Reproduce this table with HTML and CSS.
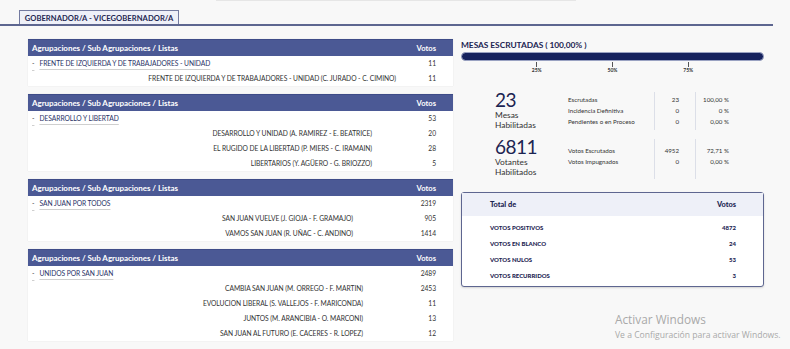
FILE: index.html
```html
<!DOCTYPE html>
<html lang="es">
<head>
<meta charset="utf-8">
<title>Resultados</title>
<link rel="stylesheet" href="styles.css">
</head>
<body>
<div class="topline"></div>
<div class="tabs">
  <div class="tab">GOBERNADOR/A - VICEGOBERNADOR/A</div>
</div>
<div class="main">
  <div class="left">
    <table class="res t1">
      <thead><tr><th class="name">Agrupaciones / Sub Agrupaciones / Listas</th><th class="vot">Votos</th></tr></thead>
      <tbody>
        <tr class="grp"><td class="name"><span class="dash">-</span><span class="link">FRENTE DE IZQUIERDA Y DE TRABAJADORES - UNIDAD</span></td><td class="vot">11</td></tr>
        <tr class="sub"><td class="name">FRENTE DE IZQUIERDA Y DE TRABAJADORES - UNIDAD (C. JURADO - C. CIMINO)</td><td class="vot">11</td></tr>
      </tbody>
    </table>
    <table class="res t2">
      <thead><tr><th class="name">Agrupaciones / Sub Agrupaciones / Listas</th><th class="vot">Votos</th></tr></thead>
      <tbody>
        <tr class="grp"><td class="name"><span class="dash">-</span><span class="link">DESARROLLO Y LIBERTAD</span></td><td class="vot">53</td></tr>
        <tr class="sub"><td class="name">DESARROLLO Y UNIDAD (A. RAMIREZ - E. BEATRICE)</td><td class="vot">20</td></tr>
        <tr class="sub"><td class="name">EL RUGIDO DE LA LIBERTAD (P. MIERS - C. IRAMAIN)</td><td class="vot">28</td></tr>
        <tr class="sub"><td class="name">LIBERTARIOS (Y. AGÜERO - G. BRIOZZO)</td><td class="vot">5</td></tr>
      </tbody>
    </table>
    <table class="res t3">
      <thead><tr><th class="name">Agrupaciones / Sub Agrupaciones / Listas</th><th class="vot">Votos</th></tr></thead>
      <tbody>
        <tr class="grp"><td class="name"><span class="dash">-</span><span class="link">SAN JUAN POR TODOS</span></td><td class="vot">2319</td></tr>
        <tr class="sub"><td class="name">SAN JUAN VUELVE (J. GIOJA - F. GRAMAJO)</td><td class="vot">905</td></tr>
        <tr class="sub"><td class="name">VAMOS SAN JUAN (R. UÑAC - C. ANDINO)</td><td class="vot">1414</td></tr>
      </tbody>
    </table>
    <table class="res t4">
      <thead><tr><th class="name">Agrupaciones / Sub Agrupaciones / Listas</th><th class="vot">Votos</th></tr></thead>
      <tbody>
        <tr class="grp"><td class="name"><span class="dash">-</span><span class="link">UNIDOS POR SAN JUAN</span></td><td class="vot">2489</td></tr>
        <tr class="sub"><td class="name">CAMBIA SAN JUAN (M. ORREGO - F. MARTIN)</td><td class="vot">2453</td></tr>
        <tr class="sub"><td class="name">EVOLUCION LIBERAL (S. VALLEJOS - F. MARICONDA)</td><td class="vot">11</td></tr>
        <tr class="sub"><td class="name">JUNTOS (M. ARANCIBIA - O. MARCONI)</td><td class="vot">13</td></tr>
        <tr class="sub"><td class="name">SAN JUAN AL FUTURO (E. CACERES - R. LOPEZ)</td><td class="vot">12</td></tr>
      </tbody>
    </table>
  </div>
  <div class="right">
    <div class="mesas-title">MESAS ESCRUTADAS ( 100,00% )</div>
    <div class="bar"><div class="bar-fill"></div></div>
    <div class="scale">
      <div class="tick tick-25"><span class="tline"></span><span class="tlabel">25%</span></div>
      <div class="tick tick-50"><span class="tline"></span><span class="tlabel">50%</span></div>
      <div class="tick tick-75"><span class="tline"></span><span class="tlabel">75%</span></div>
    </div>
    <div class="stat stat-mesas">
      <div class="big"><div class="bignum">23</div><div class="biglabel">Mesas<br>Habilitadas</div></div>
      <table class="stt">
        <tr><td class="lbl">Escrutadas</td><td class="num">23</td><td class="pct">100,00 %</td></tr>
        <tr><td class="lbl">Incidencia Definitiva</td><td class="num">0</td><td class="pct">0 %</td></tr>
        <tr><td class="lbl">Pendientes o en Proceso</td><td class="num">0</td><td class="pct">0,00 %</td></tr>
      </table>
    </div>
    <div class="stat stat-vot">
      <div class="big"><div class="bignum">6811</div><div class="biglabel">Votantes<br>Habilitados</div></div>
      <table class="stt">
        <tr><td class="lbl">Votos Escrutados</td><td class="num">4952</td><td class="pct">72,71 %</td></tr>
        <tr><td class="lbl">Votos Impugnados</td><td class="num">0</td><td class="pct">0,00 %</td></tr>
        <tr class="empty"><td class="lbl"></td><td class="num"></td><td class="pct"></td></tr>
      </table>
    </div>
    <div class="totals">
      <div class="tot-head"><span>Total de</span><span>Votos</span></div>
      <div class="tot-row"><span>VOTOS POSITIVOS</span><span>4872</span></div>
      <div class="tot-row"><span>VOTOS EN BLANCO</span><span>24</span></div>
      <div class="tot-row"><span>VOTOS NULOS</span><span>53</span></div>
      <div class="tot-row"><span>VOTOS RECURRIDOS</span><span>3</span></div>
    </div>
  </div>
</div>
<div class="watermark">
  <div class="wm1">Activar Windows</div>
  <div class="wm2">Ve a Configuración para activar Windows.</div>
</div>
</body>
</html>
```
FILE: styles.css
```css
html, body {
  margin: 0;
  padding: 0;
}
body {
  background: #f8f8f8;
  font-family: "Lato", "Liberation Sans", sans-serif;
  color: #333;
  width: 790px;
  height: 349px;
  overflow: hidden;
  position: relative;
}
.topline {
  margin-left: 216px;
  width: 360px;
  height: 1px;
  background: #e6e6e6;
}
.tabs {
  width: 754px;
  padding-left: 19px;
  padding-top: 9px;
  border-bottom: 2px solid #5d6690;
  display: flex;
}
.tab {
  width: 158px;
  height: 13px;
  border: 1px solid #737aa0;
  border-bottom: none;
  background: #eef0f8;
  font-size: 7.6px;
  font-weight: 700;
  color: #1f2752;
  line-height: 14px;
  text-align: center;
  box-sizing: content-box;
  letter-spacing: 0.05px;
}
.main {
  display: flex;
  padding-left: 28px;
  margin-top: 13px;
}
.left {
  width: 425px;
  display: flex;
  flex-direction: column;
  gap: 8px;
}
.res {
  width: 425px;
  border-collapse: collapse;
  background: #fff;
  box-shadow: 0 0 1px rgba(0,0,0,0.12);
  font-size: 6.7px;
}
.res th {
  background: #4b5995;
  color: #fff;
  font-weight: 700;
  height: 16px;
  line-height: 16px;
  padding: 0;
  font-size: 8px;
  border-top: 1px solid #3e4c88;
}
.res th.name {
  text-align: left;
  padding-left: 4px;
  letter-spacing: -0.05px;
}
.res th.vot {
  text-align: right;
  padding-right: 17px;
  font-size: 7.6px;
}
.res td {
  height: 15px;
  line-height: 15px;
  padding: 0;
  color: #333;
  letter-spacing: -0.05px;
  white-space: nowrap;
}
.res td.vot {
  width: 40px;
  text-align: right;
  padding-right: 17px;
}
.res tr.grp td.name {
  text-align: left;
  padding-left: 4px;
}
.res tr.sub td.name {
  text-align: right;
}
.t1 tr.sub td.name { padding-right: 0; }
.t2 tr.sub td.name { padding-right: 24px; }
.t3 tr.sub td.name { padding-right: 43px; }
.t4 tr.sub td.name { padding-right: 33px; }
.dash {
  margin-right: 5px;
  color: #444;
  text-decoration: underline;
  text-decoration-color: #cfcfcf;
  text-underline-offset: 4px;
}
.link {
  color: #2a3266;
  text-decoration: underline;
  text-decoration-color: #cfcfcf;
  text-underline-offset: 3px;
}
.right {
  margin-left: 8px;
  width: 310px;
}
.mesas-title {
  font-size: 8.4px;
  font-weight: 700;
  color: #1c2452;
  margin-top: 1px;
  height: 11px;
  line-height: 11px;
  letter-spacing: -0.05px;
}
.bar {
  width: 303px;
  height: 9px;
  border-radius: 5px;
  box-sizing: border-box;
  border: 1px solid #9aa2c2;
  background: #16225e;
  margin-top: 1px;
}
.scale {
  position: relative;
  width: 303px;
  height: 14px;
}
.tick {
  position: absolute;
  top: 0;
  width: 20px;
  margin-left: -10px;
  display: flex;
  flex-direction: column;
  align-items: center;
}
.tick-25 { left: 25%; }
.tick-50 { left: 50%; }
.tick-75 { left: 75%; }
.tline {
  width: 1px;
  height: 5px;
  background: #555;
  margin-top: 1px;
}
.tlabel {
  font-size: 5px;
  font-weight: 700;
  color: #333;
  line-height: 6px;
}
.stat {
  display: flex;
  padding-left: 34px;
}
.stat-mesas {
  margin-top: 17px;
}
.stat-vot {
  margin-top: 9px;
}
.big {
  width: 73px;
}
.bignum {
  font-size: 19px;
  color: #1c2452;
  line-height: 17px;
  margin-top: -1px;
  letter-spacing: -0.5px;
}
.biglabel {
  font-size: 8.4px;
  line-height: 10px;
  color: #333;
  margin-top: 2px;
}
.stt {
  border-collapse: collapse;
  font-size: 6.2px;
  color: #333;
}
.stt td {
  height: 11px;
  padding: 0;
}
.stt tr:first-child td { padding-top: 2px; }
.stt tr:last-child td { padding-bottom: 3px; }
.stat-vot .stt tr:first-child td { padding-top: 6px; }
.stat-vot .stt tr:last-child td { height: 9px; }
.stt td.lbl {
  width: 86px;
}
.stt td.num {
  width: 24px;
  text-align: right;
  padding-right: 16px;
  border-left: 1px solid #dcdfe8;
}
.stt td.pct {
  width: 33px;
  text-align: right;
  padding-right: 8px;
  border-left: 1px solid #dcdfe8;
}
.totals {
  margin-top: 13px;
  width: 303px;
  box-sizing: border-box;
  border: 1px solid #5e6690;
  border-radius: 3px;
  background: #fff;
  box-shadow: 0 1px 2px rgba(0,0,0,0.15);
  padding-bottom: 3px;
}
.tot-head {
  display: flex;
  justify-content: space-between;
  background: #eef0f8;
  height: 23px;
  align-items: center;
  padding: 0 27px 0 28px;
  font-size: 7.4px;
  font-weight: 900;
  color: #1c2452;
}
.tot-row {
  display: flex;
  justify-content: space-between;
  align-items: center;
  height: 16px;
  padding: 0 27px 0 28px;
  font-size: 6px;
  font-weight: 900;
  color: #1c2452;
}
.tot-head + .tot-row {
  margin-top: 3px;
}
.watermark {
  position: absolute;
  left: 615px;
  top: 312px;
  color: #a9a9a9;
  font-family: "Open Sans", "Noto Sans", sans-serif;
}
.wm1 {
  font-size: 11.8px;
  line-height: 15px;
}
.wm2 {
  font-size: 8.6px;
  line-height: 12px;
  margin-top: 2px;
}
```
